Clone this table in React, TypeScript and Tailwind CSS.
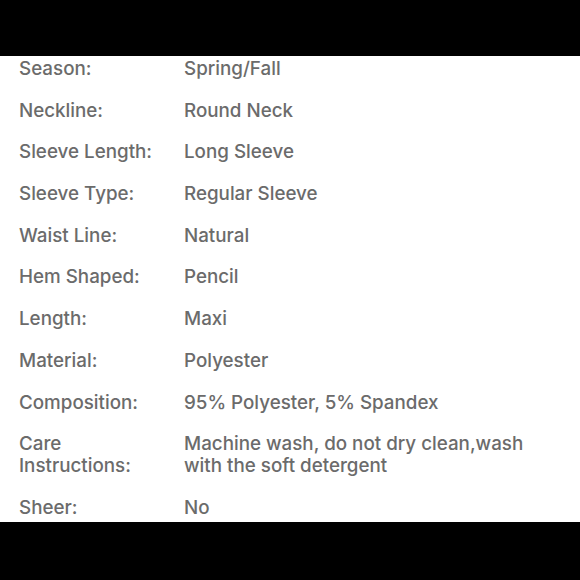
import React from "react";

const rows: [string, string][] = [
  ["Season:", "Spring/Fall"],
  ["Neckline:", "Round Neck"],
  ["Sleeve Length:", "Long Sleeve"],
  ["Sleeve Type:", "Regular Sleeve"],
  ["Waist Line:", "Natural"],
  ["Hem Shaped:", "Pencil"],
  ["Length:", "Maxi"],
  ["Material:", "Polyester"],
  ["Composition:", "95% Polyester, 5% Spandex"],
  ["Care Instructions:", "Machine wash, do not dry clean,wash with the soft detergent"],
  ["Sheer:", "No"],
];

export default function App() {
  return (
    <div className="w-[580px] h-[580px] bg-black flex flex-col">
      <div className="h-[56px] shrink-0" />
      <div
        className="h-[466px] shrink-0 bg-white pl-[19px] pr-[40px] pt-[2px] flex flex-col gap-[19.7px] text-[#6b6b6b] text-[18.8px] leading-[22px] font-medium"
        style={{ fontFamily: "Inter, 'Noto Sans', sans-serif" }}
      >
        {rows.map(([k, v]) => (
          <div key={k} className="grid grid-cols-[150px_1fr] gap-x-[15px]">
            <div>{k}</div>
            <div>{v}</div>
          </div>
        ))}
      </div>
    </div>
  );
}
